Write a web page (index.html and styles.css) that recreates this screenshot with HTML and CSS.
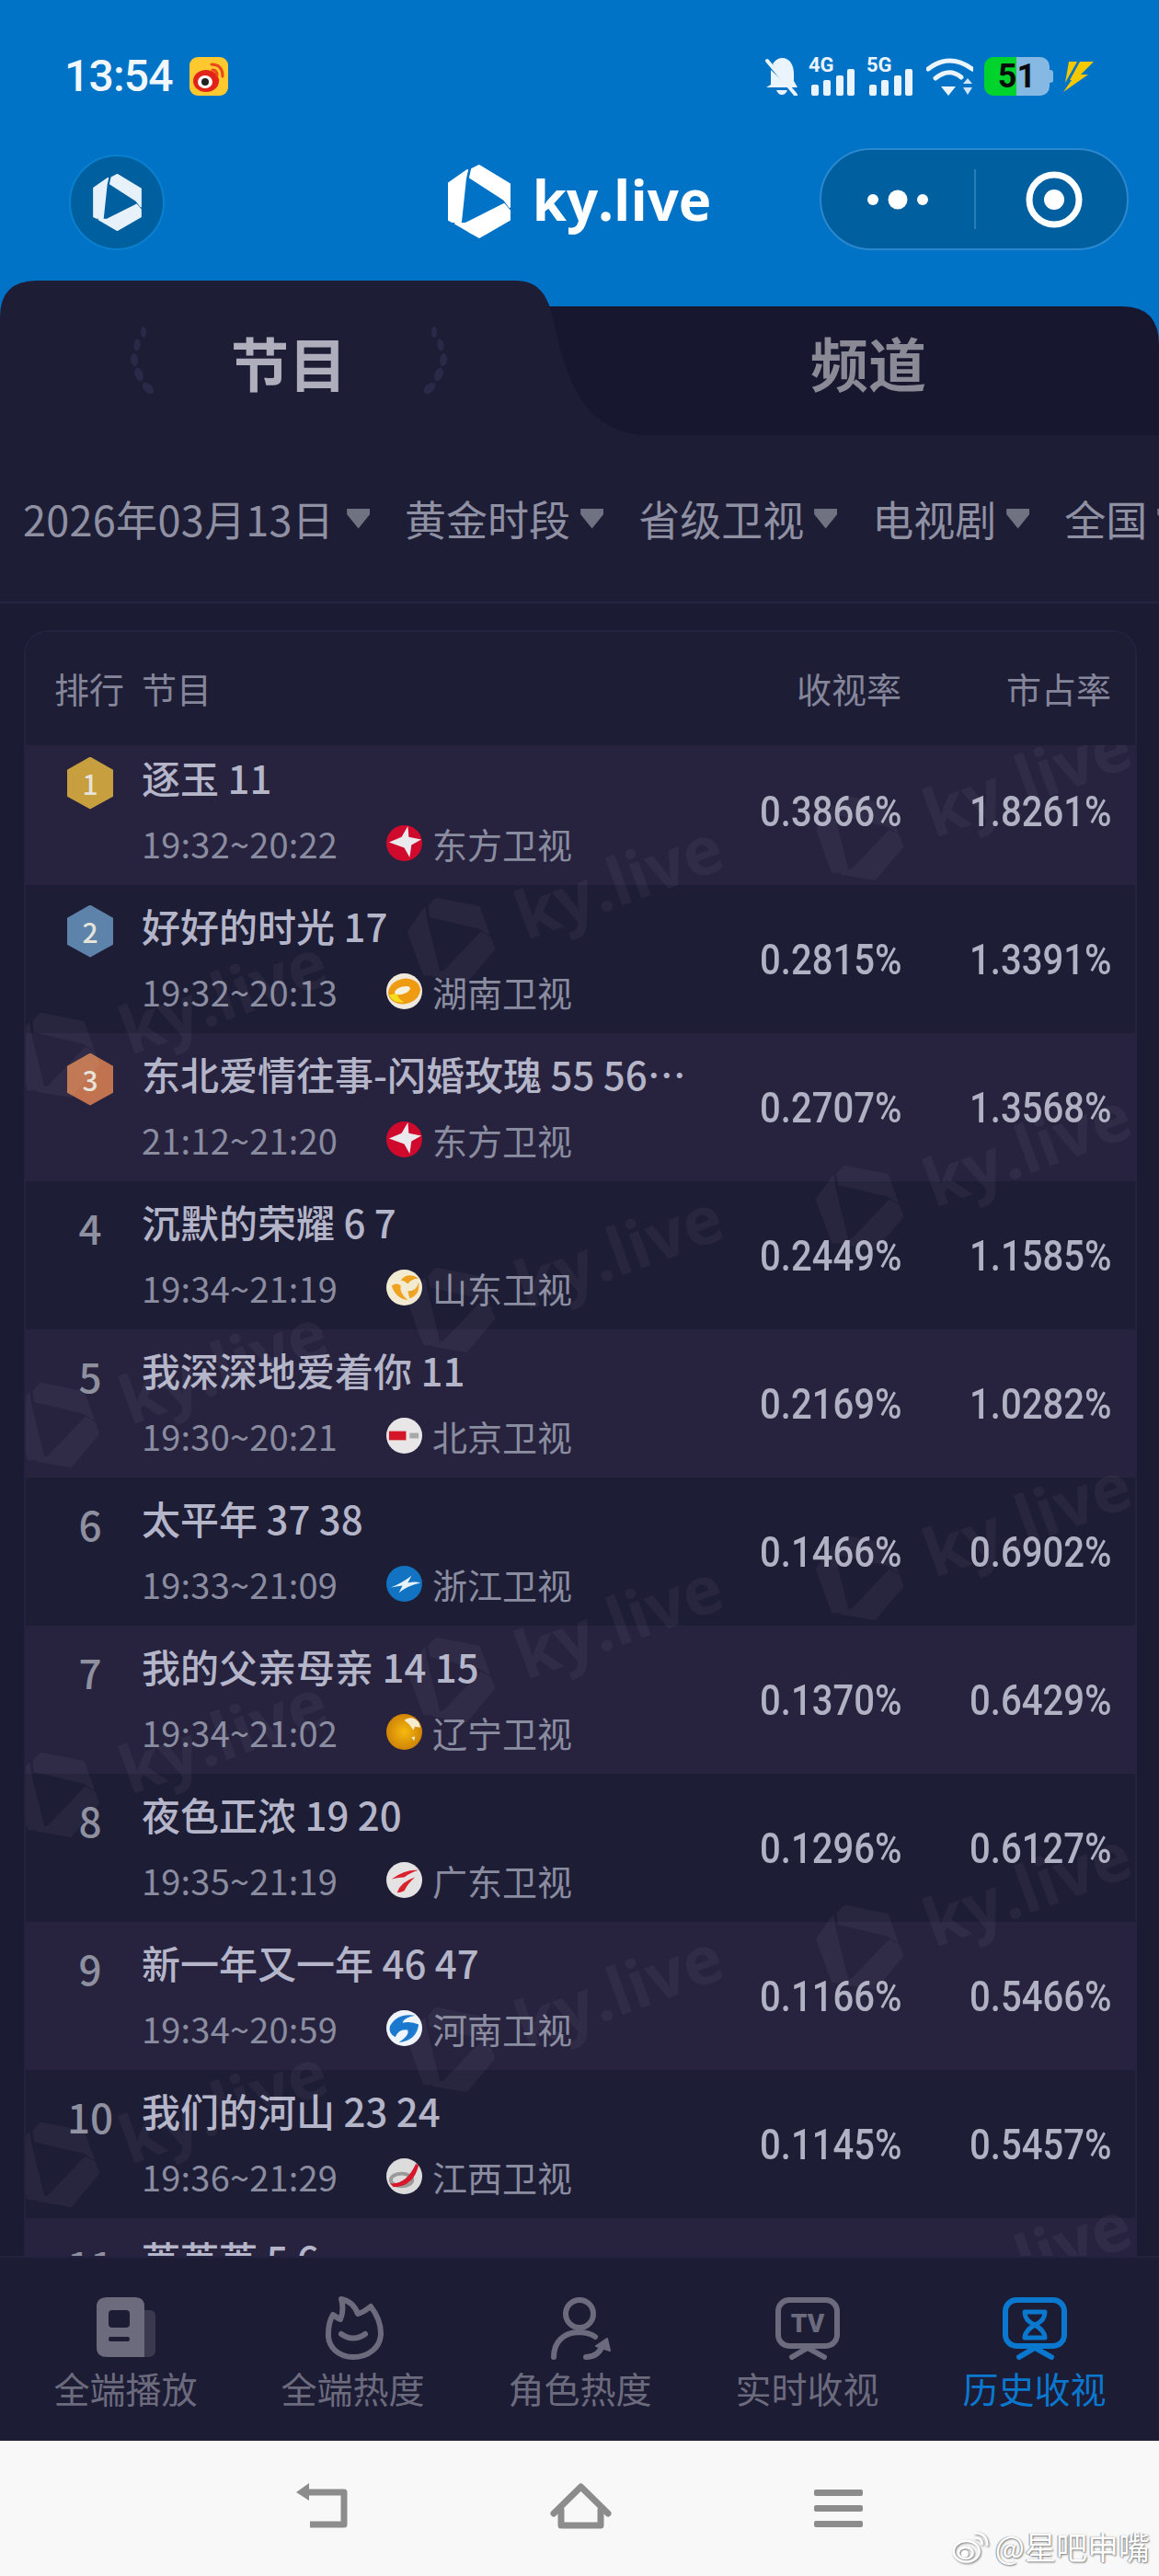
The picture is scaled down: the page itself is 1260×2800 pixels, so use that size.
FILE: index.html
```html
<!DOCTYPE html>
<html lang="zh-CN">
<head>
  <meta charset="UTF-8" />
  <meta name="viewport" content="width=device-width, initial-scale=1.0"/>
  <title>ky.live</title>
  <link rel="stylesheet" href="styles.css">
</head>
<body>
  <!-- shared icons -->
  <svg class="sprite" aria-hidden="true">
    <symbol id="logo" viewBox="0 0 68 80">
      <path fill="currentColor" stroke="currentColor" stroke-width="2" stroke-linejoin="round" d="M21 6L1 20V60L5 62H14L19 15ZM26 5L34 1L67 21V46L61 38L24 14ZM19 64L61 43L67 50V60L34 79L8 64Z"/>
    </symbol>
    <symbol id="laurel" viewBox="0 0 33 74">
      <ellipse cx="17" cy="6" rx="3" ry="6" fill="currentColor"/>
      <ellipse cx="10" cy="20" rx="3.500" ry="6.500" transform="rotate(8 10 20)" fill="currentColor"/>
      <ellipse cx="7" cy="36" rx="4" ry="7" transform="rotate(-6 7 36)" fill="currentColor"/>
      <ellipse cx="12" cy="52" rx="4.500" ry="7.500" transform="rotate(-20 12 52)" fill="currentColor"/>
      <ellipse cx="22" cy="67" rx="4.500" ry="7.500" transform="rotate(-45 22 67)" fill="currentColor"/>
    </symbol>
    <symbol id="ch-dragon" viewBox="0 0 40 40">
      <circle cx="20" cy="20" r="20" fill="#cf0a2c"/>
      <path fill="#e9e9ee" d="M24 1L25 13L39 16L28 22L26 36L20 25L3 19L17 13Z"/>
    </symbol>
    <symbol id="ch-hunan" viewBox="0 0 40 40">
      <circle cx="20" cy="20" r="20" fill="#eee9dc"/>
      <ellipse cx="20" cy="20" rx="18" ry="14" transform="rotate(-12 20 20)" fill="#ef9b12"/>
      <path fill="#f4dc1e" d="M3 24Q8 34 20 32Q12 28 12 22Z"/>
      <ellipse cx="18" cy="19" rx="9" ry="4" transform="rotate(-18 18 19)" fill="#f6f0df"/>
    </symbol>
    <symbol id="ch-shandong" viewBox="0 0 40 40">
      <circle cx="20" cy="20" r="20" fill="#f3ead2"/>
      <path fill="#eea21f" d="M6 18Q10 32 24 34Q14 26 16 18Q12 14 6 18ZM16 12Q24 2 36 10Q28 10 24 16Q20 12 16 12ZM24 24Q34 24 36 14Q38 28 26 32Z"/>
    </symbol>
    <symbol id="ch-beijing" viewBox="0 0 40 40">
      <circle cx="20" cy="20" r="20" fill="#e8e6e6"/>
      <rect x="3" y="15" width="19" height="10" fill="#d4182a"/>
      <rect x="26" y="17" width="10" height="6" fill="#a9a9a9"/>
    </symbol>
    <symbol id="ch-zhejiang" viewBox="0 0 40 40">
      <circle cx="20" cy="20" r="20" fill="#1173c2"/>
      <path fill="#e8f2fa" d="M5 24Q18 19 28 11L24 19Q32 17 38 19Q24 22 14 30L18 22Q10 23 5 24Z"/>
    </symbol>
    <symbol id="ch-liaoning" viewBox="0 0 40 40">
      <defs>
        <radialGradient id="gold"><stop offset="0" stop-color="#f7b90f"/><stop offset="1" stop-color="#cf8405"/></radialGradient>
      </defs>
      <circle cx="20" cy="20" r="20" fill="url(#gold)"/>
      <path fill="#f6ecd0" d="M20 7Q28 1 36 9L38 15L32 14L30 18L26 12ZM28 26L32 25L31 30Z"/>
    </symbol>
    <symbol id="ch-guangdong" viewBox="0 0 40 40">
      <circle cx="20" cy="20" r="20" fill="#e4e2e2"/>
      <path fill="#d8232e" d="M6 19Q20 8 36 9Q26 12 20 17Q14 17 6 19ZM12 34Q16 22 32 17Q24 24 20 32Q16 34 12 34Z"/>
    </symbol>
    <symbol id="ch-henan" viewBox="0 0 40 40">
      <circle cx="20" cy="20" r="20" fill="#eef4fa"/>
      <path fill="#1a78cf" d="M4 18Q12 3 32 6Q20 8 18 14Q28 12 36 16Q34 34 14 36Q26 28 24 22Q14 20 10 30Q2 26 4 18Z"/>
    </symbol>
    <symbol id="ch-jiangxi" viewBox="0 0 40 40">
      <circle cx="20" cy="20" r="20" fill="#dcdcdc"/>
      <ellipse cx="17" cy="24" rx="12" ry="7" fill="none" stroke="#9a9a9a" stroke-width="4"/>
      <path fill="#d7172b" d="M4 28Q22 30 33 6L36 8Q30 32 8 32Z"/>
    </symbol>
  </svg>

  <header class="top">
    <div class="statusbar">
      <div class="status-left">
        <span class="clock">13:54</span>
        <svg class="weibo-badge" viewBox="0 0 42 42">
          <rect width="42" height="42" rx="9" fill="#ffc82e"/>
          <ellipse cx="18" cy="26" rx="14" ry="12" fill="#e2231a"/>
          <ellipse cx="17" cy="27" rx="8" ry="7" fill="#fff"/>
          <circle cx="17" cy="27" r="4" fill="#222"/>
          <path d="M24 8Q36 8 36 21M25 14Q30 14 30 20" fill="none" stroke="#e8481a" stroke-width="3" stroke-linecap="round"/>
        </svg>
      </div>
      <div class="status-right">
        <svg class="ic-bell" viewBox="0 0 36 42" fill="#eaf4fc">
          <path d="M18 1C27 1 31 9 31 18V26L35 33H1L6 30V14L23 30L8 8C10 4 14 1 18 1Z"/>
          <path d="M12 36H24Q22 41 18 41Q14 41 12 36Z"/>
          <path d="M2 4L33 41" stroke="#eaf4fc" stroke-width="4" stroke-linecap="round"/>
        </svg>
        <svg class="ic-signal" viewBox="0 0 51 42" fill="#eaf4fc">
          <text x="0" y="16" class="net-label">4G</text>
          <rect x="3" y="30" width="8" height="12" rx="2"/><rect x="16" y="25" width="8" height="17" rx="2"/>
          <rect x="30" y="20" width="8" height="22" rx="2"/><rect x="42" y="13" width="8" height="29" rx="2"/>
        </svg>
        <svg class="ic-signal" viewBox="0 0 51 42" fill="#eaf4fc">
          <text x="0" y="16" class="net-label">5G</text>
          <rect x="3" y="30" width="8" height="12" rx="2"/><rect x="16" y="25" width="8" height="17" rx="2"/>
          <rect x="30" y="20" width="8" height="22" rx="2"/><rect x="42" y="13" width="8" height="29" rx="2"/>
        </svg>
        <svg class="ic-wifi" viewBox="0 0 51 42">
          <path d="M2 13Q25 -5 50 13M10 23Q25 11 38 22" fill="none" stroke="#eaf4fc" stroke-width="5" stroke-linecap="round"/>
          <path fill="#eaf4fc" d="M16 32H32L24 42Z"/>
          <path fill="#cfe4f6" d="M40 29L45 23L50 29ZM40 33H50L45 41Z"/>
        </svg>
        <div class="battery">51</div>
        <svg class="ic-bolt" viewBox="0 0 35 35" fill="#f5c800">
          <path d="M7 1h9L3 24zM19 1h15L20 15h8L1 34l9-13h-2z"/>
        </svg>
      </div>
    </div>

    <div class="appbar">
      <div class="app-cell">
        <div class="app-avatar"><svg class="app-avatar-logo"><use href="#logo"/></svg></div>
      </div>
      <div class="brand">
        <svg class="brand-logo"><use href="#logo"/></svg>
        <span class="brand-name">ky.live</span>
      </div>
      <div class="app-cell app-cell-end">
        <div class="capsule">
          <div class="capsule-side">
            <svg class="capsule-dots" viewBox="0 0 66 22" fill="#fff">
              <circle cx="6" cy="11" r="6"/><circle cx="33" cy="11" r="10.5"/><circle cx="60" cy="11" r="6"/>
            </svg>
          </div>
          <div class="capsule-side capsule-target">
            <svg class="capsule-ring" viewBox="0 0 64 64">
              <circle cx="32" cy="32" r="27" fill="none" stroke="#fff" stroke-width="7"/>
              <circle cx="32" cy="32" r="11" fill="#fff"/>
            </svg>
          </div>
        </div>
      </div>
    </div>

    <div class="tabs">
      <svg class="tabs-shape" viewBox="0 0 1260 168" preserveAspectRatio="none">
        <path fill="#171730" d="M500 28H1220Q1260 28 1260 70V168H500Z"/>
        <path fill="#1e1d36" d="M0 168V40Q0 0 40 0H560C585 0 595 15 601 40C612 90 628 168 705 168Z"/>
      </svg>
      <div class="tab tab-active">
        <svg class="laurel"><use href="#laurel"/></svg>
        <span>节目</span>
        <svg class="laurel laurel-right"><use href="#laurel"/></svg>
      </div>
      <div class="tab tab-idle"><span>频道</span></div>
    </div>
  </header>

  <nav class="filters">
    <div class="filter filter-date">2026年03月13日<i class="caret"></i></div>
    <div class="filter">黄金时段<i class="caret"></i></div>
    <div class="filter">省级卫视<i class="caret"></i></div>
    <div class="filter">电视剧<i class="caret"></i></div>
    <div class="filter">全国<i class="caret"></i></div>
  </nav>

  <main class="board">
    <section class="card">
      <div class="row-grid card-head">
        <div class="head-rank">排行</div>
        <div>节目</div>
        <div class="num">收视率</div>
        <div class="num">市占率</div>
      </div>

      <div class="rows">
        <div class="row-grid row row-first">
          <div class="rank"><span class="medal medal-gold">1</span></div>
          <div class="info">
            <div class="title">逐玉 11</div>
            <div class="sub"><span class="time">19:32~20:22</span><svg class="ch"><use href="#ch-dragon"/></svg><span>东方卫视</span></div>
          </div>
          <div class="num"><span class="pct">0.3866%</span></div>
          <div class="num"><span class="pct">1.8261%</span></div>
        </div>
        <div class="row-grid row">
          <div class="rank"><span class="medal medal-silver">2</span></div>
          <div class="info">
            <div class="title">好好的时光 17</div>
            <div class="sub"><span class="time">19:32~20:13</span><svg class="ch"><use href="#ch-hunan"/></svg><span>湖南卫视</span></div>
          </div>
          <div class="num"><span class="pct">0.2815%</span></div>
          <div class="num"><span class="pct">1.3391%</span></div>
        </div>
        <div class="row-grid row">
          <div class="rank"><span class="medal medal-bronze">3</span></div>
          <div class="info">
            <div class="title">东北爱情往事-闪婚玫瑰 55 56 57 58</div>
            <div class="sub"><span class="time">21:12~21:20</span><svg class="ch"><use href="#ch-dragon"/></svg><span>东方卫视</span></div>
          </div>
          <div class="num"><span class="pct">0.2707%</span></div>
          <div class="num"><span class="pct">1.3568%</span></div>
        </div>
        <div class="row-grid row">
          <div class="rank">4</div>
          <div class="info">
            <div class="title">沉默的荣耀 6 7</div>
            <div class="sub"><span class="time">19:34~21:19</span><svg class="ch"><use href="#ch-shandong"/></svg><span>山东卫视</span></div>
          </div>
          <div class="num"><span class="pct">0.2449%</span></div>
          <div class="num"><span class="pct">1.1585%</span></div>
        </div>
        <div class="row-grid row">
          <div class="rank">5</div>
          <div class="info">
            <div class="title">我深深地爱着你 11</div>
            <div class="sub"><span class="time">19:30~20:21</span><svg class="ch"><use href="#ch-beijing"/></svg><span>北京卫视</span></div>
          </div>
          <div class="num"><span class="pct">0.2169%</span></div>
          <div class="num"><span class="pct">1.0282%</span></div>
        </div>
        <div class="row-grid row">
          <div class="rank">6</div>
          <div class="info">
            <div class="title">太平年 37 38</div>
            <div class="sub"><span class="time">19:33~21:09</span><svg class="ch"><use href="#ch-zhejiang"/></svg><span>浙江卫视</span></div>
          </div>
          <div class="num"><span class="pct">0.1466%</span></div>
          <div class="num"><span class="pct">0.6902%</span></div>
        </div>
        <div class="row-grid row">
          <div class="rank">7</div>
          <div class="info">
            <div class="title">我的父亲母亲 14 15</div>
            <div class="sub"><span class="time">19:34~21:02</span><svg class="ch"><use href="#ch-liaoning"/></svg><span>辽宁卫视</span></div>
          </div>
          <div class="num"><span class="pct">0.1370%</span></div>
          <div class="num"><span class="pct">0.6429%</span></div>
        </div>
        <div class="row-grid row">
          <div class="rank">8</div>
          <div class="info">
            <div class="title">夜色正浓 19 20</div>
            <div class="sub"><span class="time">19:35~21:19</span><svg class="ch"><use href="#ch-guangdong"/></svg><span>广东卫视</span></div>
          </div>
          <div class="num"><span class="pct">0.1296%</span></div>
          <div class="num"><span class="pct">0.6127%</span></div>
        </div>
        <div class="row-grid row">
          <div class="rank">9</div>
          <div class="info">
            <div class="title">新一年又一年 46 47</div>
            <div class="sub"><span class="time">19:34~20:59</span><svg class="ch"><use href="#ch-henan"/></svg><span>河南卫视</span></div>
          </div>
          <div class="num"><span class="pct">0.1166%</span></div>
          <div class="num"><span class="pct">0.5466%</span></div>
        </div>
        <div class="row-grid row">
          <div class="rank">10</div>
          <div class="info">
            <div class="title">我们的河山 23 24</div>
            <div class="sub"><span class="time">19:36~21:29</span><svg class="ch"><use href="#ch-jiangxi"/></svg><span>江西卫视</span></div>
          </div>
          <div class="num"><span class="pct">0.1145%</span></div>
          <div class="num"><span class="pct">0.5457%</span></div>
        </div>
        <div class="row-grid row">
          <div class="rank">11</div>
          <div class="info">
            <div class="title">苒苒苒 5 6</div>
          </div>
        </div>
      </div>

      <!-- repeating ky.live watermark over the table -->
      <div class="wm wm-r1"><svg class="wm-logo"><use href="#logo"/></svg><span>ky.live</span></div>
      <div class="wm wm-r2"><svg class="wm-logo"><use href="#logo"/></svg><span>ky.live</span></div>
      <div class="wm wm-r3"><svg class="wm-logo"><use href="#logo"/></svg><span>ky.live</span></div>
      <div class="wm wm-r4"><svg class="wm-logo"><use href="#logo"/></svg><span>ky.live</span></div>
      <div class="wm wm-r5"><svg class="wm-logo"><use href="#logo"/></svg><span>ky.live</span></div>
      <div class="wm wm-m1"><svg class="wm-logo"><use href="#logo"/></svg><span>ky.live</span></div>
      <div class="wm wm-m2"><svg class="wm-logo"><use href="#logo"/></svg><span>ky.live</span></div>
      <div class="wm wm-m3"><svg class="wm-logo"><use href="#logo"/></svg><span>ky.live</span></div>
      <div class="wm wm-m4"><svg class="wm-logo"><use href="#logo"/></svg><span>ky.live</span></div>
      <div class="wm wm-l1"><svg class="wm-logo"><use href="#logo"/></svg><span>ky.live</span></div>
      <div class="wm wm-l2"><svg class="wm-logo"><use href="#logo"/></svg><span>ky.live</span></div>
      <div class="wm wm-l3"><svg class="wm-logo"><use href="#logo"/></svg><span>ky.live</span></div>
      <div class="wm wm-l4"><svg class="wm-logo"><use href="#logo"/></svg><span>ky.live</span></div>
    </section>
  </main>

  <nav class="tabbar">
    <div class="tabbar-item">
      <svg class="tabbar-icon" viewBox="0 0 72 72">
        <path fill="#3a3950" d="M50 17H62Q68 17 68 24V60Q68 68 60 68H46Z"/>
        <path fill="currentColor" fill-rule="evenodd" d="M16 3H46Q56 3 56 13V68H16Q4 68 4 58V13Q4 3 16 3ZM21 17Q17 17 17 21V32Q17 36 21 36H36Q40 36 40 32V21Q40 17 36 17ZM19 46Q17 46 17 48.500Q17 51 19 51H38Q40 51 40 48.500Q40 46 38 46Z"/>
      </svg>
      <span>全端播放</span>
    </div>
    <div class="tabbar-item">
      <svg class="tabbar-icon" viewBox="0 0 72 72" fill="none" stroke="currentColor" stroke-width="6" stroke-linecap="round" stroke-linejoin="round">
        <path d="M23 5C33 7 38 13 41 21C46 20 50 17 55 13C62 22 66 32 66 42C66 58 52 68 36 68C20 68 8 57 9 42C9 34 11 27 14 22C17 24 19 26 22 27C25 20 25 12 23 5Z"/>
        <path d="M23 43Q36 52 49 43"/>
      </svg>
      <span>全端热度</span>
    </div>
    <div class="tabbar-item">
      <svg class="tabbar-icon" viewBox="0 0 72 72" fill="none" stroke="currentColor" stroke-width="6" stroke-linecap="round" stroke-linejoin="round">
        <ellipse cx="35" cy="21" rx="15" ry="15"/>
        <path d="M7 68C7 52 17 42 33 41C40 41 47 42 52 46"/>
        <path d="M42 68C50 68 57 64 60 55"/>
        <path fill="currentColor" stroke-width="2" d="M53 56L65 48L68 61Z"/>
      </svg>
      <span>角色热度</span>
    </div>
    <div class="tabbar-item">
      <svg class="tabbar-icon" viewBox="0 0 72 72" fill="none" stroke="currentColor" stroke-width="6" stroke-linecap="round" stroke-linejoin="round">
        <rect x="4" y="6" width="64" height="50" rx="12"/>
        <path d="M19 68L36 58L54 68"/>
        <text x="36" y="41" class="tv-label">TV</text>
      </svg>
      <span>实时收视</span>
    </div>
    <div class="tabbar-item tabbar-active">
      <svg class="tabbar-icon" viewBox="0 0 72 72" fill="none" stroke="currentColor" stroke-width="6" stroke-linecap="round" stroke-linejoin="round">
        <rect x="4" y="6" width="64" height="50" rx="12"/>
        <path d="M19 68L36 58L54 68"/>
        <path stroke-width="5" d="M25 19H47C47 27 41 31 36 33C31 31 25 27 25 19ZM25 47H47C47 40 41 36 36 33C31 36 25 40 25 47Z"/>
      </svg>
      <span>历史收视</span>
    </div>
  </nav>

  <footer class="sysnav">
    <svg class="sys-back" viewBox="0 0 56 49" fill="none" stroke="#8c8c8c" stroke-width="7" stroke-linejoin="round">
      <path d="M11 10H52V45H15"/>
      <path fill="#8c8c8c" stroke="none" d="M0 10L14 0V19Z"/>
    </svg>
    <svg class="sys-home" viewBox="0 0 67 50" fill="none" stroke="#8c8c8c" stroke-width="7" stroke-linecap="round" stroke-linejoin="round">
      <path d="M4 33L33.500 4L63 33"/>
      <path d="M12 29V46H55V29"/>
    </svg>
    <div class="sys-menu"><i></i><i></i><i></i></div>
    <div class="credit">
      <svg class="credit-logo" viewBox="0 0 46 46" fill="none" stroke="#fff" stroke-width="3">
        <ellipse cx="18" cy="29" rx="16" ry="13"/>
        <ellipse cx="17" cy="31" rx="9" ry="7"/>
        <circle cx="16" cy="32" r="3" fill="#fff"/>
        <path d="M28 6Q44 6 44 22M29 12Q38 12 38 21"/>
      </svg>
      <span>@星吧申嘴</span>
    </div>
  </footer>
</body>
</html>
```

FILE: styles.css
```css
* {
  box-sizing: border-box;
}

html, body {
  margin: 0;
  padding: 0;
}

body {
  width: 1260px;
  height: 2800px;
  overflow: hidden;
  display: flex;
  flex-direction: column;
  font-family: "Noto Sans CJK SC", "Noto Sans", sans-serif;
  background: #1e1d36;
}

.sprite {
  width: 0;
  height: 0;
  position: absolute;
}

/* blue header */
.top {
  background: #0073c6;
  padding-top: 62px;
}

.statusbar {
  display: flex;
  justify-content: space-between;
  align-items: center;
  height: 42px;
  padding: 0 70px;
}

.status-left {
  display: flex;
  align-items: center;
  gap: 18px;
}

.clock {
  font-family: Roboto, sans-serif;
  font-weight: 500;
  font-size: 48px;
  line-height: 42px;
  letter-spacing: -0.8px;
  color: #f1f8fd;
}

.weibo-badge {
  width: 42px;
  height: 42px;
}

.status-right {
  display: flex;
  align-items: center;
}

.ic-bell {
  width: 36px;
  height: 42px;
  margin-right: 11px;
}

.ic-signal {
  width: 51px;
  height: 42px;
  margin-right: 12px;
  overflow: visible;
}

.net-label {
  font-family: Roboto, sans-serif;
  font-weight: 700;
  font-size: 22px;
}

.ic-wifi {
  width: 51px;
  height: 42px;
  margin-left: 2px;
  margin-right: 12px;
}

.battery {
  position: relative;
  width: 71px;
  height: 42px;
  margin-right: 14px;
  border-radius: 10px;
  background: linear-gradient(90deg, #00d32c 49%, #86b8e4 49%);
  color: #0a0a0a;
  font-family: Roboto, sans-serif;
  font-weight: 700;
  font-size: 36px;
  line-height: 42px;
  text-align: center;
}

.battery::after {
  content: "";
  position: absolute;
  right: -4px;
  top: 14px;
  width: 4px;
  height: 14px;
  border-radius: 0 3px 3px 0;
  background: #86b8e4;
}

.ic-bolt {
  width: 35px;
  height: 35px;
}

.appbar {
  display: grid;
  grid-template-columns: 1fr auto 1fr;
  align-items: center;
  height: 111px;
  margin-top: 57px;
  padding: 0 33px;
}

.app-cell {
  display: flex;
  padding-left: 42px;
}

.app-cell-end {
  justify-content: flex-end;
  padding-left: 0;
}

.app-avatar {
  display: flex;
  align-items: center;
  justify-content: center;
  width: 104px;
  height: 104px;
  margin-top: 6px;
  border-radius: 50%;
  background: #005f9f;
  border: 2px solid #0a80cf;
}

.app-avatar-logo {
  width: 53px;
  height: 62px;
  color: #e6f1fa;
}

.brand {
  display: flex;
  align-items: center;
  gap: 24px;
  color: #fff;
}

.brand-logo {
  width: 68px;
  height: 80px;
  margin-top: 5px;
}

.brand-name {
  font-family: "Open Sans", sans-serif;
  font-weight: 700;
  font-size: 60px;
  line-height: 80px;
}

.capsule {
  display: flex;
  width: 336px;
  height: 111px;
  border-radius: 56px;
  background: #005f9f;
  border: 2px solid #2b88cf;
}

.capsule-side {
  display: flex;
  flex: 0 0 166px;
  align-items: center;
  justify-content: center;
}

.capsule-target {
  position: relative;
  flex: 1;
  padding-left: 8px;
}

.capsule-target::before {
  content: "";
  position: absolute;
  left: 0;
  top: 21px;
  bottom: 21px;
  width: 2px;
  background: #2a7db8;
}

.capsule-dots {
  width: 66px;
  height: 22px;
}

.capsule-ring {
  width: 64px;
  height: 64px;
}

/* tabs */
.tabs {
  position: relative;
  display: grid;
  grid-template-columns: 628px 632px;
  height: 168px;
  margin-top: 33px;
}

.tabs-shape {
  position: absolute;
  inset: 0;
  width: 100%;
  height: 100%;
}

.tab {
  position: relative;
  display: flex;
  align-items: center;
  justify-content: center;
  gap: 79px;
  padding-top: 6px;
  font-weight: 700;
  font-size: 63px;
}

.tab-active {
  color: #aeaebd;
}

.tab-idle {
  color: #8a8a96;
}

.laurel {
  width: 33px;
  height: 74px;
  color: #2a2947;
}

.laurel-right {
  transform: scaleX(-1);
}

/* filter row */
.filters {
  display: flex;
  align-items: center;
  flex: none;
  gap: 38px;
  height: 183px;
  padding: 0 0 0 25px;
  border-bottom: 2px solid #252440;
  overflow: hidden;
  white-space: nowrap;
  font-size: 45px;
  color: #8f91a3;
}

.filter {
  display: flex;
  align-items: center;
  flex: none;
  gap: 11px;
}

.filter-date {
  gap: 14px;
  letter-spacing: 0.3px;
}

.caret {
  width: 25px;
  height: 22px;
  background: #6f7280;
  clip-path: polygon(0 0, 100% 0, 100% 30%, 50% 100%, 0 30%);
}

/* table */
.board {
  flex: 1;
  min-height: 0;
  overflow: hidden;
  padding: 31px 26px 0 28px;
  background: #1c1b34;
}

.card {
  position: relative;
  height: 100%;
  overflow: hidden;
  border-radius: 24px 24px 0 0;
  box-shadow: 0 0 0 2px #232240;
  background: #1e1d36;
}

.row-grid {
  display: grid;
  grid-template-columns: 126px minmax(0, 1fr) 228px 228px;
  padding-right: 26px;
  align-items: center;
}

.card-head {
  position: relative;
  z-index: 2;
  height: 123px;
  padding-bottom: 2px;
  background: #1e1d36;
  font-size: 38px;
  color: #85869a;
}

.head-rank {
  padding-left: 31px;
}

.num {
  text-align: right;
}

.row {
  height: 161px;
  background: #1e1d36;
}

.row:nth-child(odd) {
  background: #27233f;
}

.row-first {
  margin-top: -9px;
}

.rank {
  display: flex;
  align-items: center;
  justify-content: center;
  align-self: start;
  height: 100px;
  padding-left: 14px;
  font-size: 44px;
  font-weight: 500;
  color: #8e909f;
}

.medal {
  display: flex;
  align-items: center;
  justify-content: center;
  width: 50px;
  height: 57px;
  clip-path: polygon(50% 0, 100% 25%, 100% 76%, 50% 100%, 0 76%, 0 25%);
  font-size: 30px;
  font-weight: 500;
  color: #e6e3da;
}

.medal-gold {
  background: #c79f3e;
}

.medal-silver {
  background: #5d83ab;
}

.medal-bronze {
  background: #c0734e;
}

.info {
  align-self: start;
  min-width: 0;
  padding: 13px 6px 0 0;
}

.title {
  height: 62px;
  font-size: 42px;
  font-weight: 500;
  line-height: 62px;
  color: #b4b5c8;
  white-space: nowrap;
  overflow: hidden;
  text-overflow: ellipsis;
}

.sub {
  display: flex;
  align-items: center;
  height: 52px;
  margin-top: 14px;
  font-size: 38px;
  color: #8a8ca0;
}

.time {
  flex: 0 0 266px;
  letter-spacing: 0.2px;
}

.ch {
  flex: none;
  width: 39px;
  height: 39px;
  margin-right: 11px;
}

.pct {
  display: inline-block;
  font-family: Roboto, sans-serif;
  font-weight: 500;
  font-size: 46px;
  color: #b0b2c4;
  transform: scaleX(0.87);
  transform-origin: right center;
}

/* watermark */
.wm {
  position: absolute;
  z-index: 1;
  display: flex;
  align-items: center;
  gap: 34px;
  width: 370px;
  height: 100px;
  transform: rotate(-20deg);
  font-family: "Open Sans", sans-serif;
  font-weight: 700;
  font-size: 72px;
  color: #fff;
  opacity: 0.04;
  pointer-events: none;
}

.wm-logo {
  flex: none;
  width: 84px;
  height: 98px;
}

.wm-r1 { left: 856px; top: 125px; }
.wm-r2 { left: 856px; top: 527px; }
.wm-r3 { left: 856px; top: 929px; }
.wm-r4 { left: 856px; top: 1331px; }
.wm-r5 { left: 856px; top: 1733px; }
.wm-m1 { left: 412px; top: 236px; }
.wm-m2 { left: 412px; top: 638px; }
.wm-m3 { left: 412px; top: 1040px; }
.wm-m4 { left: 412px; top: 1442px; }
.wm-l1 { left: -18px; top: 361px; }
.wm-l2 { left: -18px; top: 763px; }
.wm-l3 { left: -18px; top: 1165px; }
.wm-l4 { left: -18px; top: 1567px; }

/* bottom tab bar */
.tabbar {
  position: relative;
  z-index: 3;
  display: grid;
  flex: none;
  grid-template-columns: repeat(5, 247px);
  height: 201px;
  padding: 40px 0 0 13px;
  background: #1d1c35;
  border-top: 2px solid #232240;
}

.tabbar-item {
  display: flex;
  flex-direction: column;
  align-items: center;
  color: #6c6b7e;
  font-size: 39px;
  line-height: 50px;
}

.tabbar-icon {
  width: 72px;
  height: 72px;
  margin-bottom: 4px;
}

.tv-label {
  font-family: Roboto, sans-serif;
  font-weight: 900;
  font-size: 28px;
  text-anchor: middle;
  fill: currentColor;
  stroke: none;
}

.tabbar-active {
  color: #0a78cf;
}

/* android nav buttons */
.sysnav {
  position: relative;
  display: flex;
  flex: none;
  justify-content: center;
  align-items: flex-start;
  gap: 220px;
  height: 147px;
  padding-top: 46px;
  background: #f8f8f8;
}

.sys-back {
  width: 56px;
  height: 49px;
}

.sys-home {
  width: 67px;
  height: 50px;
}

.sys-menu {
  display: flex;
  flex-direction: column;
  gap: 10px;
  width: 53px;
  padding-top: 7px;
}

.sys-menu i {
  display: block;
  height: 7px;
  border-radius: 2px;
  background: #8c8c8c;
}

.credit {
  position: absolute;
  right: 10px;
  bottom: 12px;
  display: flex;
  align-items: center;
  gap: 4px;
  font-size: 34px;
  line-height: 40px;
  color: #fff;
  text-shadow: 1px 1px 2px #777, -1px 0 1px #999;
}

.credit-logo {
  width: 46px;
  height: 40px;
  filter: drop-shadow(1px 1px 1px #777);
}
```
